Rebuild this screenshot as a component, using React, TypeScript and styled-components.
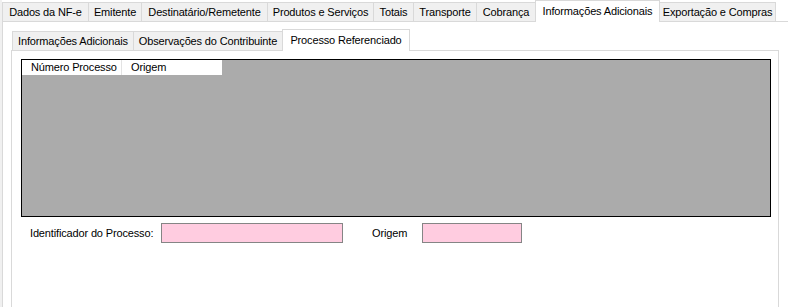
import React from "react";
import styled, { createGlobalStyle } from "styled-components";

const GlobalStyle = createGlobalStyle`
  html, body { margin: 0; padding: 0; background: #ffffff; }
  body { font-family: "Liberation Sans", Arial, sans-serif; font-size: 11px; color: #000; letter-spacing: -0.15px; }
`;

const Root = styled.div`
  width: 788px;
  height: 307px;
  overflow: hidden;
  padding-left: 2px;
  box-sizing: border-box;
  display: flex;
  flex-direction: column;
  background: linear-gradient(to right, #f0f0f0 0, #f0f0f0 2px, #ffffff 2px);
`;

const TabStrip = styled.div<{ $h: number; $pl?: number }>`
  display: flex;
  align-items: flex-end;
  height: ${(p) => p.$h}px;
  padding-left: ${(p) => p.$pl ?? 0}px;
  flex: none;
`;

const Tab = styled.div<{ $active?: boolean; $w: number; $h: number }>`
  box-sizing: border-box;
  width: ${(p) => p.$w}px;
  height: ${(p) => (p.$active ? p.$h + 3 : p.$h)}px;
  margin-right: -1px;
  margin-bottom: ${(p) => (p.$active ? -1 : 0)}px;
  border: 1px solid #d9d9d9;
  border-bottom: none;
  background: ${(p) => (p.$active ? "#ffffff" : "#f0f0f0")};
  position: relative;
  z-index: ${(p) => (p.$active ? 2 : 1)};
  display: flex;
  align-items: ${(p) => (p.$active ? "flex-start" : "center")};
  padding-top: ${(p) => (p.$active ? 4 : 0)}px;
  justify-content: center;
  white-space: nowrap;
  font-size: 11px;
  line-height: 13px;
  flex: none;
`;

const Page = styled.div<{ $pt: number; $pr: number; $pl: number; $openRight?: boolean }>`
  box-sizing: border-box;
  flex: 1;
  border: 1px solid #d9d9d9;
  border-bottom: none;
  border-right: ${(p) => (p.$openRight ? "none" : "1px solid #d9d9d9")};
  background: #ffffff;
  padding: ${(p) => p.$pt}px ${(p) => p.$pr}px 0 ${(p) => p.$pl}px;
  display: flex;
  flex-direction: column;
  min-height: 0;
`;

const Grid = styled.div`
  box-sizing: border-box;
  width: 750px;
  height: 158px;
  border: 1px solid #000000;
  background: #ababab;
  flex: none;
`;

const GridHeader = styled.div`
  display: flex;
  width: 200px;
  height: 15px;
  background: #ffffff;
  overflow: hidden;
`;

const HeaderCell = styled.div<{ $last?: boolean }>`
  box-sizing: border-box;
  width: 100px;
  height: 15px;
  padding-left: 9px;
  padding-top: 1px;
  line-height: 13px;
  border-right: ${(p) => (p.$last ? "none" : "1px solid #e3e3e3")};
  white-space: nowrap;
  overflow: hidden;
`;

const FieldRow = styled.div`
  display: flex;
  align-items: center;
  height: 20px;
  margin-top: 6px;
  flex: none;
`;

const Label = styled.span<{ $w: number; $ml: number }>`
  width: ${(p) => p.$w}px;
  margin-left: ${(p) => p.$ml}px;
  white-space: nowrap;
  line-height: 13px;
`;

const TextBox = styled.div<{ $w: number }>`
  box-sizing: border-box;
  width: ${(p) => p.$w}px;
  height: 20px;
  border: 1px solid #858585;
  background: #ffcce0;
`;

const outerTabs = [
  { t: "Dados da NF-e", w: 87 },
  { t: "Emitente", w: 54 },
  { t: "Destinatário/Remetente", w: 127 },
  { t: "Produtos e Serviços", w: 107 },
  { t: "Totais", w: 41 },
  { t: "Transporte", w: 64 },
  { t: "Cobrança", w: 60 },
  { t: "Informações Adicionais", w: 125, active: true },
  { t: "Exportação e Compras", w: 117 },
];

const innerTabs = [
  { t: "Informações Adicionais", w: 122 },
  { t: "Observações do Contribuinte", w: 150 },
  { t: "Processo Referenciado", w: 128, active: true },
];

export default function App() {
  return (
    <>
      <GlobalStyle />
      <Root>
        <TabStrip $h={21}>
          {outerTabs.map((tb) => (
            <Tab key={tb.t} $w={tb.w} $h={19} $active={tb.active}>
              {tb.t}
            </Tab>
          ))}
        </TabStrip>
        <Page $pt={7} $pr={9} $pl={8} $openRight>
          <TabStrip $h={21} $pl={1}>
            {innerTabs.map((tb) => (
              <Tab key={tb.t} $w={tb.w} $h={19} $active={tb.active}>
                {tb.t}
              </Tab>
            ))}
          </TabStrip>
          <Page $pt={8} $pr={7} $pl={9}>
            <Grid>
              <GridHeader>
                <HeaderCell>Número Processo</HeaderCell>
                <HeaderCell $last>Origem</HeaderCell>
              </GridHeader>
            </Grid>
            <FieldRow>
              <Label $w={131} $ml={9}>Identificador do Processo:</Label>
              <TextBox $w={182} />
              <Label $w={50} $ml={29}>Origem</Label>
              <TextBox $w={100} />
            </FieldRow>
          </Page>
        </Page>
      </Root>
    </>
  );
}
